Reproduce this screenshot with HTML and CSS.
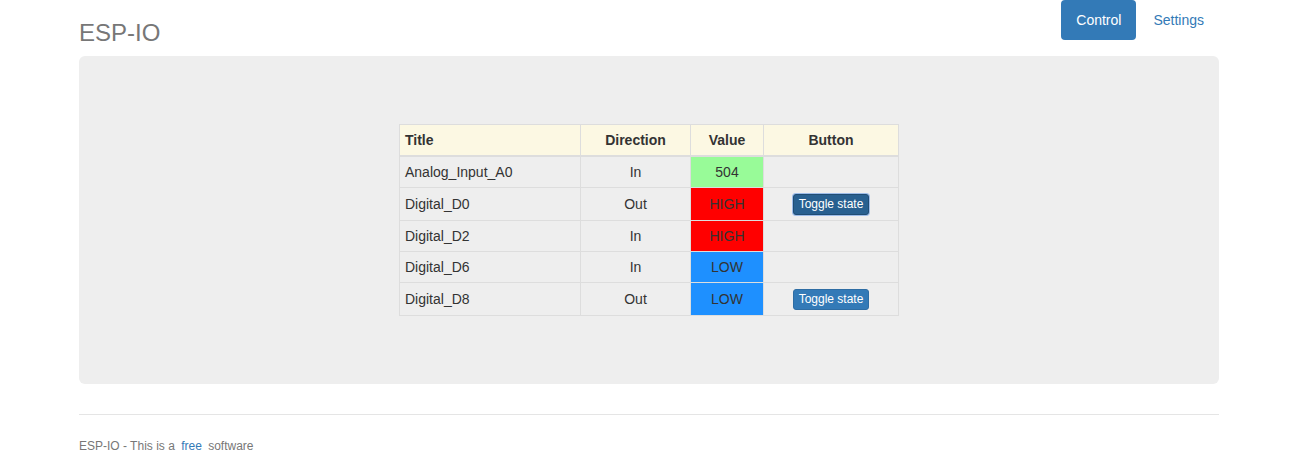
FILE: index.html
```html
<!DOCTYPE html>
<html>
<head>
<meta charset="utf-8">
<title>ESP-IO</title>
<link rel="stylesheet" href="styles.css">
</head>
<body>
<div class="container">
  <div class="header">
    <h3 class="brand">ESP-IO</h3>
    <ul class="nav-pills">
      <li><a class="pill active" href="#">Control</a></li>
      <li><a class="pill" href="#">Settings</a></li>
    </ul>
  </div>
  <div class="jumbotron">
    <table class="io-table">
      <colgroup>
        <col class="c-title"><col class="c-dir"><col class="c-val"><col class="c-btn">
      </colgroup>
      <thead>
        <tr><th class="left">Title</th><th>Direction</th><th>Value</th><th>Button</th></tr>
      </thead>
      <tbody>
        <tr><td class="left">Analog_Input_A0</td><td>In</td><td class="v-green">504</td><td></td></tr>
        <tr><td class="left">Digital_D0</td><td>Out</td><td class="v-red">HIGH</td><td><button class="btn focus">Toggle state</button></td></tr>
        <tr><td class="left">Digital_D2</td><td>In</td><td class="v-red">HIGH</td><td></td></tr>
        <tr><td class="left">Digital_D6</td><td>In</td><td class="v-blue">LOW</td><td></td></tr>
        <tr><td class="left">Digital_D8</td><td>Out</td><td class="v-blue">LOW</td><td><button class="btn">Toggle state</button></td></tr>
      </tbody>
    </table>
  </div>
  <div class="footer">
    <p>ESP-IO - This is a <a href="#" class="free">free</a> software</p>
  </div>
</div>
</body>
</html>
```
FILE: styles.css
```css
* { box-sizing: border-box; }
html, body { margin: 0; padding: 0; background: #fff; }
body {
  font-family: "Liberation Sans", Arial, sans-serif;
  font-size: 14px;
  line-height: 20px;
  color: #333;
}
.container {
  width: 1140px;
  margin-left: 79px;
}
.header {
  display: flex;
  justify-content: space-between;
  align-items: flex-start;
}
.brand {
  margin: 20px 0 10px;
  font-size: 24px;
  line-height: 26px;
  font-weight: 400;
  color: #777;
}
.nav-pills {
  list-style: none;
  margin: 0;
  padding: 0;
  display: flex;
  gap: 2px;
}
.pill {
  display: block;
  padding: 10px 15px;
  line-height: 20px;
  border-radius: 4px;
  color: #337ab7;
  text-decoration: none;
}
.pill.active {
  background: #337ab7;
  color: #fff;
}
.jumbotron {
  background: #eee;
  border-radius: 6px;
  padding: 68px 0;
  margin-bottom: 30px;
  display: flex;
  justify-content: center;
}
.io-table {
  border-collapse: collapse;
  table-layout: fixed;
  width: 499px;
}
.c-title { width: 181px; }
.c-dir { width: 110px; }
.c-val { width: 73px; }
.c-btn { width: 135px; }
.io-table th, .io-table td {
  border: 1px solid #ddd;
  padding: 5px;
  line-height: 20px;
  height: 31px;
  text-align: center;
  vertical-align: middle;
}
.io-table th {
  background: #fcf8e3;
  font-weight: 700;
  border-bottom-width: 2px;
  height: 31px;
}
.io-table .left { text-align: left; }
.v-green { background: #98fb98; }
.v-red { background: #ff0000; }
.v-blue { background: #1e90ff; }
.btn {
  font-family: "Liberation Sans", Arial, sans-serif;
  font-size: 12px;
  line-height: 17px;
  padding: 1px 5px;
  color: #fff;
  background: #337ab7;
  border: 1px solid #2e6da4;
  border-radius: 3px;
  cursor: pointer;
  display: inline-block;
  vertical-align: middle;
}
.btn.focus {
  background: #286090;
  border-color: #204d74;
  box-shadow: 0 0 0 1px rgba(102, 155, 230, 0.6);
}
.footer {
  border-top: 1px solid #e5e5e5;
  padding-top: 21px;
  color: #777;
  font-size: 12px;
}
.footer p { margin: 0; line-height: 20px; }
.free {
  color: #337ab7;
  text-decoration: none;
  margin: 0 3px;
}
```
